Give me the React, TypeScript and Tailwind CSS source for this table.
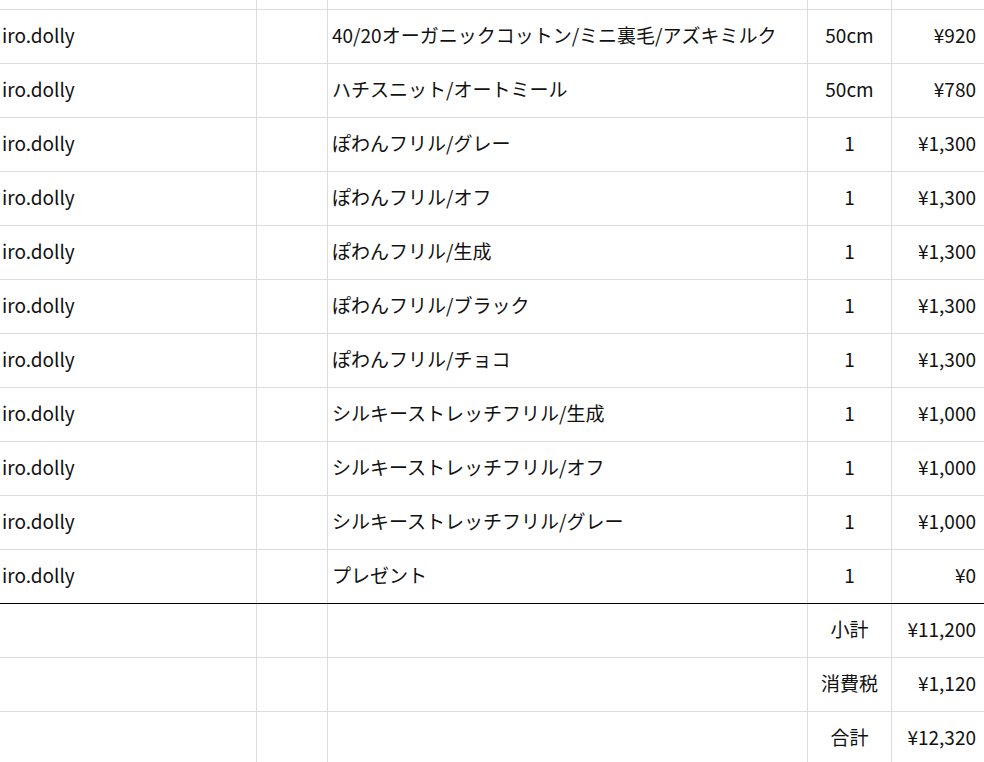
const items = [
  { name: '40/20オーガニックコットン/ミニ裏毛/アズキミルク', qty: '50cm', price: '¥920' },
  { name: 'ハチスニット/オートミール', qty: '50cm', price: '¥780' },
  { name: 'ぽわんフリル/グレー', qty: '1', price: '¥1,300' },
  { name: 'ぽわんフリル/オフ', qty: '1', price: '¥1,300' },
  { name: 'ぽわんフリル/生成', qty: '1', price: '¥1,300' },
  { name: 'ぽわんフリル/ブラック', qty: '1', price: '¥1,300' },
  { name: 'ぽわんフリル/チョコ', qty: '1', price: '¥1,300' },
  { name: 'シルキーストレッチフリル/生成', qty: '1', price: '¥1,000' },
  { name: 'シルキーストレッチフリル/オフ', qty: '1', price: '¥1,000' },
  { name: 'シルキーストレッチフリル/グレー', qty: '1', price: '¥1,000' },
  { name: 'プレゼント', qty: '1', price: '¥0' },
];

const totals = [
  { label: '小計', value: '¥11,200' },
  { label: '消費税', value: '¥1,120' },
  { label: '合計', value: '¥12,320' },
];

type RowProps = {
  shop?: string;
  name?: string;
  qty?: string;
  price?: string;
  last?: boolean;
};

const Row = ({ shop = '', name = '', qty = '', price = '', last = false }: RowProps) => {
  return (
    <div
      className={`flex h-[54px] shrink-0 border-b ${
        last ? 'border-b-black' : 'border-b-[#dcdcdc]'
      }`}
    >
      <div className="flex w-[257px] shrink-0 items-center border-r border-r-[#dcdcdc] pb-[4px] pl-[2px]">
        {shop}
      </div>
      <div className="w-[71px] shrink-0 border-r border-r-[#dcdcdc]" />
      <div className="flex w-[480px] shrink-0 items-center border-r border-r-[#dcdcdc] pb-[4px] pl-[4px] whitespace-nowrap">
        {name}
      </div>
      <div className="flex w-[84px] shrink-0 items-center justify-center border-r border-r-[#dcdcdc] pb-[4px]">
        {qty}
      </div>
      <div className="flex flex-1 items-center justify-end pr-[8px] pb-[4px]">{price}</div>
    </div>
  );
};

export default function App() {
  return (
    <div
      className="flex h-[762px] w-[984px] flex-col overflow-hidden bg-white text-[19px] leading-none text-[#111]"
      style={{ fontFamily: '"Noto Sans CJK JP", "Noto Sans", sans-serif' }}
    >
      {/* partial row at the top */}
      <div className="flex h-[10px] shrink-0 border-b border-b-[#dcdcdc]">
        <div className="w-[257px] shrink-0 border-r border-r-[#dcdcdc]" />
        <div className="w-[71px] shrink-0 border-r border-r-[#dcdcdc]" />
        <div className="w-[480px] shrink-0 border-r border-r-[#dcdcdc]" />
        <div className="w-[84px] shrink-0 border-r border-r-[#dcdcdc]" />
        <div className="flex-1" />
      </div>

      {items.map((it, i) => (
        <Row
          key={i}
          shop="iro.dolly"
          name={it.name}
          qty={it.qty}
          price={it.price}
          last={i === items.length - 1}
        />
      ))}

      {totals.map((t) => (
        <Row key={t.label} qty={t.label} price={t.value} />
      ))}
    </div>
  );
}
